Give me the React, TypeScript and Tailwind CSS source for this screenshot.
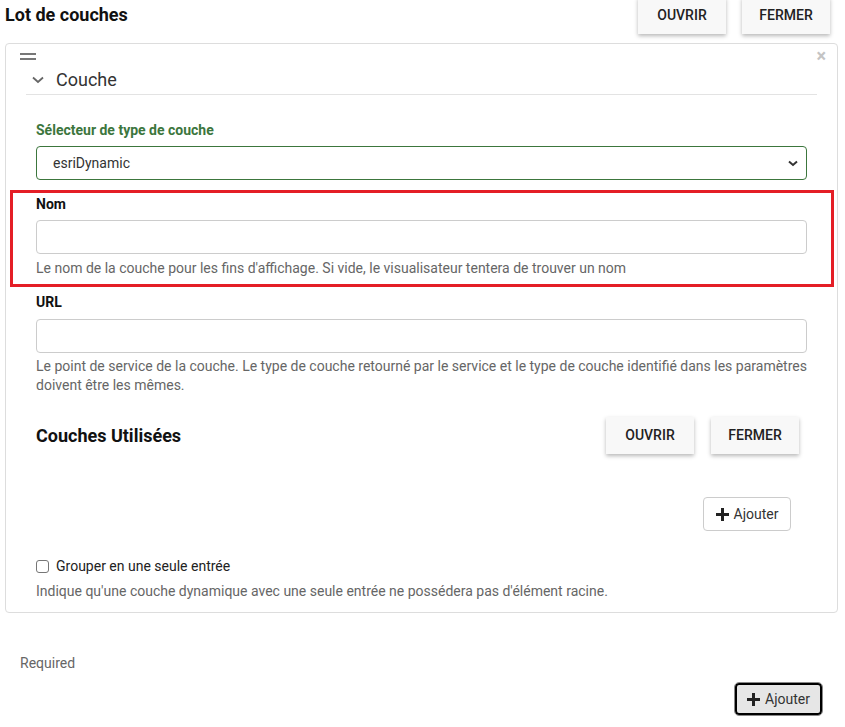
import React from "react";

function RaisedButton({ label, className = "" }: { label: string; className?: string }) {
  return (
    <button
      type="button"
      className={
        "flex h-[37px] w-[88px] items-center justify-center bg-[#f8f8f8] text-[14px] font-medium text-[#222] shadow-[0_2px_4px_rgba(0,0,0,0.28)] " +
        className
      }
    >
      {label}
    </button>
  );
}

function PlusIcon() {
  return (
    <svg width="13" height="13" viewBox="0 0 13 13" aria-hidden>
      <path d="M5 0h3v5h5v3H8v5H5V8H0V5h5z" fill="#222" />
    </svg>
  );
}

function TextInput() {
  return <div className="h-[34px] w-full rounded-[4px] border border-[#ccc] bg-white" />;
}

export default function App() {
  return (
    <div className="min-h-[727px] bg-white font-['Roboto',sans-serif] text-[#222]">
      <div className="flex h-[43px] items-start justify-between pl-[5px] pr-[15px]">
        <h1 className="mt-[3px] text-[18px] font-bold leading-[24px] text-[#111]">Lot de couches</h1>
        <div className="-mt-[3px] flex gap-[16px]">
          <RaisedButton label="OUVRIR" />
          <RaisedButton label="FERMER" />
        </div>
      </div>

      <div className="relative ml-[5px] mr-[7px] rounded-[4px] border border-[#ddd] pb-[11px]">
        <div className="pl-[14px] pt-[9px]">
          <div className="flex w-[16px] flex-col gap-[3px]">
            <span className="h-[2px] bg-[#777]" />
            <span className="h-[2px] bg-[#777]" />
          </div>
        </div>
        <span className="absolute right-[11px] top-[3px] text-[18px] font-bold leading-[17px] text-[#c4c4c4]">×</span>

        <div className="mx-[20px] border-b border-[#e3e3e3]">
          <div className="mt-[6px] flex h-[28px] items-center pl-[6px]">
            <svg width="12" height="8" viewBox="0 0 12 8" aria-hidden>
              <path d="M1 1.5l5 4.5 5-4.5" fill="none" stroke="#666" strokeWidth="1.8" />
            </svg>
            <span className="ml-[12px] text-[18px] leading-[24px] text-[#333]">Couche</span>
          </div>
        </div>

        <div className="px-[30px]">
          <div className="mt-[25px] text-[14px] font-bold leading-[20px] text-[#3c763d]">Sélecteur de type de couche</div>
          <div className="mt-[6px] flex h-[34px] items-center justify-between rounded-[4px] border border-[#3c763d] pl-[16px] pr-[8px]">
            <span className="text-[14px] text-[#333]">esriDynamic</span>
            <svg width="10" height="7" viewBox="0 0 10 7" aria-hidden>
              <path d="M1 1.5l4 3.5 4-3.5" fill="none" stroke="#333" strokeWidth="2" />
            </svg>
          </div>

          <div className="-ml-[26px] -mr-[27px] mt-[10px] border-[3px] border-[#e41e26] pb-[6px] pl-[23px] pr-[24px] pt-[1px]">
            <div className="text-[14px] font-bold leading-[20px] text-[#111]">Nom</div>
            <div className="mt-[6px]">
              <TextInput />
            </div>
            <p className="mt-[4px] text-[14px] leading-[20px] text-[#666]">
              Le nom de la couche pour les fins d'affichage. Si vide, le visualisateur tentera de trouver un nom
            </p>
          </div>

          <div className="mt-[5px] text-[14px] font-bold leading-[20px] text-[#111]">URL</div>
          <div className="mt-[7px]">
            <TextInput />
          </div>
          <p className="mt-[4px] text-[14px] leading-[19px] text-[#666]">
            Le point de service de la couche. Le type de couche retourné par le service et le type de couche identifié dans les paramètres
            doivent être les mêmes.
          </p>

          <div className="mt-[22px] flex items-center justify-between pr-[8px]">
            <h2 className="text-[18px] font-bold leading-[24px] text-[#111]">Couches Utilisées</h2>
            <div className="flex gap-[17px]">
              <RaisedButton label="OUVRIR" />
              <RaisedButton label="FERMER" />
            </div>
          </div>

          <div className="mt-[43px] flex justify-end pr-[16px]">
            <button
              type="button"
              className="flex h-[34px] w-[88px] items-center justify-center gap-[5px] rounded-[4px] border border-[#ccc] bg-white text-[14px] text-[#333]"
            >
              <PlusIcon />
              Ajouter
            </button>
          </div>

          <label className="mt-[25px] flex items-center gap-[7px]">
            <span className="h-[13px] w-[13px] rounded-[3px] border border-[#767676] bg-white" />
            <span className="text-[14px] leading-[20px] text-[#222]">Grouper en une seule entrée</span>
          </label>
          <p className="mt-[5px] text-[14px] leading-[20px] text-[#666]">
            Indique qu'une couche dynamique avec une seule entrée ne possédera pas d'élément racine.
          </p>
        </div>
      </div>

      <div className="mt-[40px] pl-[20px] text-[14px] leading-[20px] text-[#666]">Required</div>

      <div className="mt-[10px] flex justify-end pr-[23px]">
        <button
          type="button"
          className="flex h-[32px] w-[87px] items-center justify-center gap-[5px] rounded-[4px] border-2 border-black bg-[#e6e6e6] text-[14px] text-[#333] outline outline-1 outline-[#888]"
        >
          <PlusIcon />
          Ajouter
        </button>
      </div>
    </div>
  );
}
